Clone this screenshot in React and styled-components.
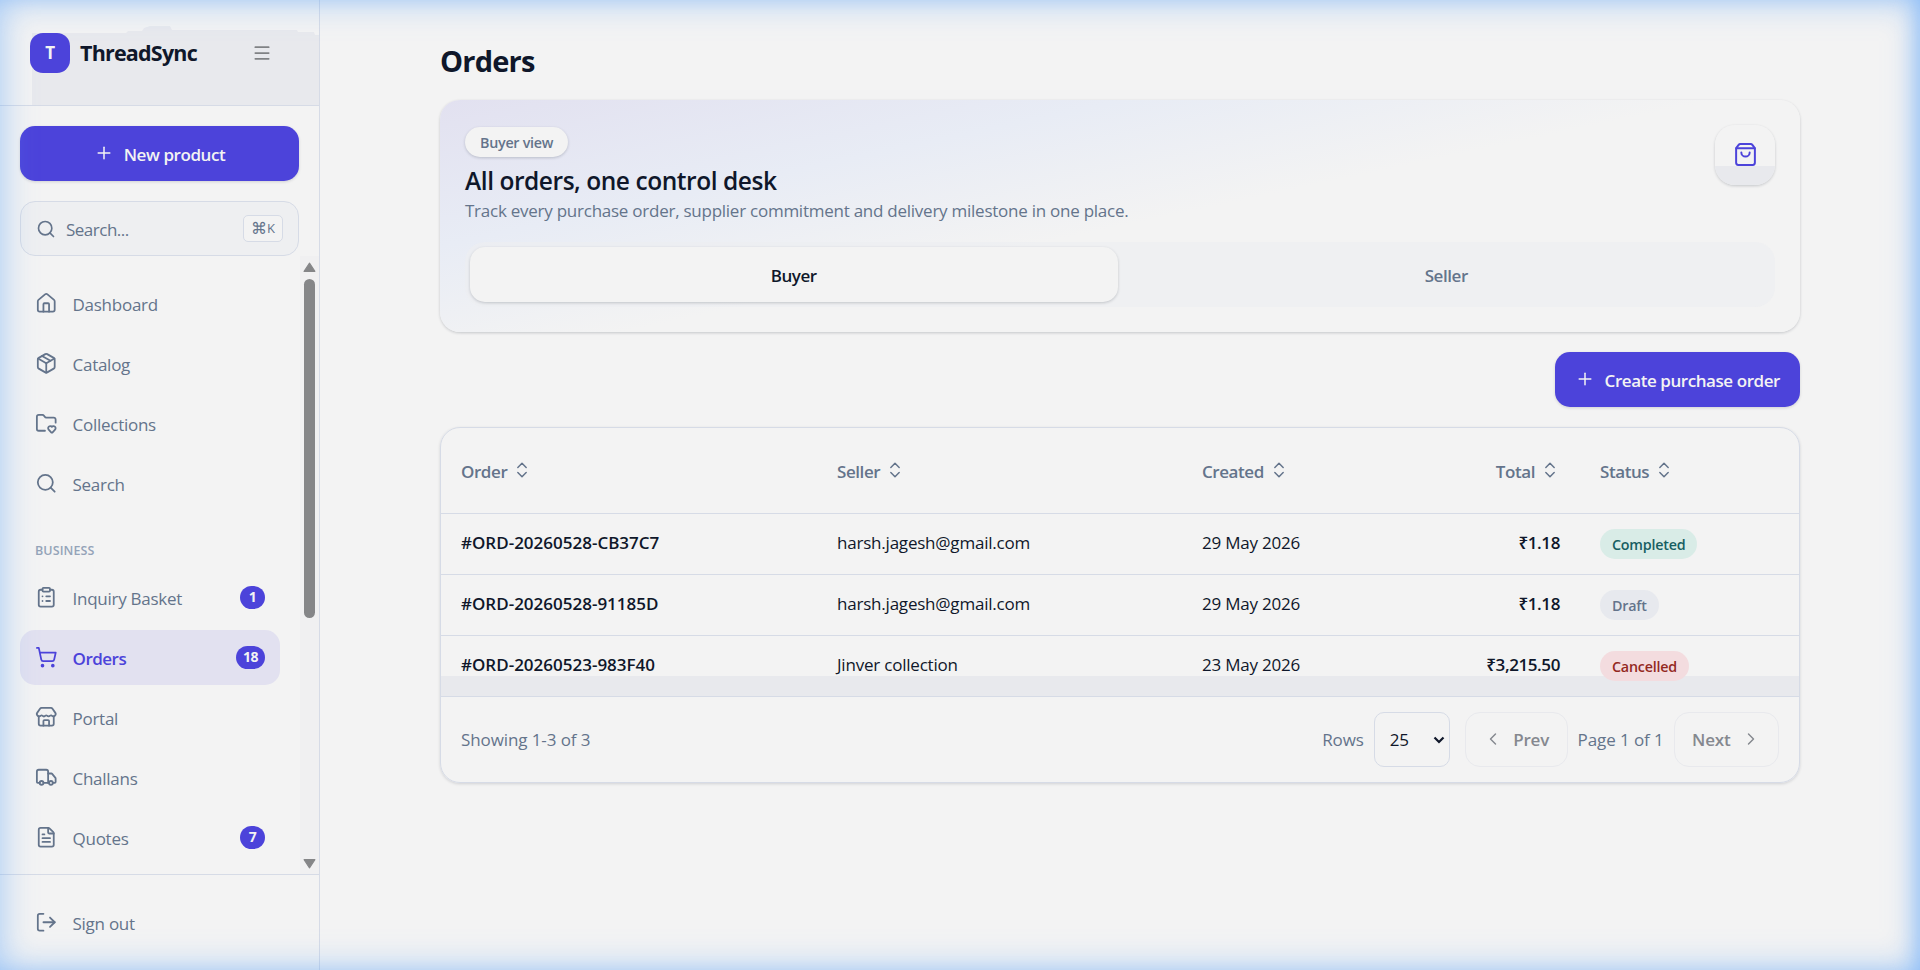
import styled, { createGlobalStyle } from "styled-components";
import {
  ChevronLeft,
  ChevronRight,
  ChevronsUpDown,
  ClipboardList,
  FileText,
  FolderHeart,
  House,
  LogOut,
  Menu,
  Package,
  Plus,
  Search,
  ShoppingBag,
  ShoppingCart,
  Store,
  Truck,
} from "lucide-react";

const mainLinks = [
  { label: "Dashboard", icon: House },
  { label: "Catalog", icon: Package },
  { label: "Collections", icon: FolderHeart },
  { label: "Search", icon: Search },
];

const businessLinks = [
  { label: "Inquiry Basket", icon: ClipboardList, count: 1 },
  { label: "Orders", icon: ShoppingCart, count: 18, active: true },
  { label: "Portal", icon: Store },
  { label: "Challans", icon: Truck },
  { label: "Quotes", icon: FileText, count: 7 },
];

const orders = [
  {
    id: "#ORD-20260528-CB37C7",
    seller: "harsh.jagesh@gmail.com",
    created: "29 May 2026",
    total: "₹1.18",
    status: "Completed",
  },
  {
    id: "#ORD-20260528-91185D",
    seller: "harsh.jagesh@gmail.com",
    created: "29 May 2026",
    total: "₹1.18",
    status: "Draft",
  },
  {
    id: "#ORD-20260523-983F40",
    seller: "Jinver collection",
    created: "23 May 2026",
    total: "₹3,215.50",
    status: "Cancelled",
  },
];

const columns = ["Order", "Seller", "Created", "Total", "Status"];

const statusColors = {
  Completed: { background: "#d9ece7", color: "#175e62" },
  Draft: { background: "#e7e9ee", color: "#64748b" },
  Cancelled: { background: "#f3dcdf", color: "#93291f" },
};

function NavLink({ label, icon: Icon, count, active }) {
  return (
    <NavItem $active={active}>
      <Icon size={22.5} strokeWidth={1.9} />
      <NavLabel>{label}</NavLabel>
      {count && <Count>{count}</Count>}
    </NavItem>
  );
}

function Sidebar() {
  return (
    <Aside>
      <Brand>
        <Logo>T</Logo>
        <BrandName>ThreadSync</BrandName>
        <MenuButton>
          <Menu size={20} strokeWidth={2.1} />
        </MenuButton>
      </Brand>
      <Actions>
        <PrimaryButton>
          <Plus size={20} strokeWidth={1.8} />
          New product
        </PrimaryButton>
        <SearchBox>
          <Search size={20} strokeWidth={2} />
          <span>Search...</span>
          <Kbd>
            <b>⌘</b>K
          </Kbd>
        </SearchBox>
      </Actions>
      <NavArea>
        <Nav>
          {mainLinks.map((link) => (
            <NavLink key={link.label} {...link} />
          ))}
          <NavTitle>BUSINESS</NavTitle>
          {businessLinks.map((link) => (
            <NavLink key={link.label} {...link} />
          ))}
        </Nav>
        <Scrollbar>
          <ScrollArrow viewBox="0 0 12 10">
            <path d="M6 1 L11 8.6 H1 Z" />
          </ScrollArrow>
          <ScrollThumb />
          <ScrollArrow viewBox="0 0 12 10">
            <path d="M6 9 L11 1.4 H1 Z" />
          </ScrollArrow>
        </Scrollbar>
      </NavArea>
      <AsideFooter>
        <NavLink label="Sign out" icon={LogOut} />
      </AsideFooter>
    </Aside>
  );
}

function Hero() {
  return (
    <HeroCard>
      <HeroTop>
        <div>
          <ViewBadge>Buyer view</ViewBadge>
          <HeroTitle>All orders, one control desk</HeroTitle>
          <HeroText>
            Track every purchase order, supplier commitment and delivery
            milestone in one place.
          </HeroText>
        </div>
        <HeroIcon>
          <ShoppingBag size={25} strokeWidth={1.9} />
        </HeroIcon>
      </HeroTop>
      <Tabs>
        <Tab $active>Buyer</Tab>
        <Tab>Seller</Tab>
      </Tabs>
    </HeroCard>
  );
}

function OrdersTable() {
  return (
    <TableCard>
      <Table>
        <colgroup>
          <col width="376" />
          <col width="365" />
          <col width="200" />
          <col width="198" />
          <col />
        </colgroup>
        <thead>
          <tr>
            {columns.map((name) => (
              <HeadCell key={name} $right={name === "Total"}>
                <SortLabel>
                  {name}
                  <ChevronsUpDown size={20} strokeWidth={1.8} />
                </SortLabel>
              </HeadCell>
            ))}
          </tr>
        </thead>
        <tbody>
          {orders.map((order) => (
            <Row key={order.id}>
              <Cell $strong>{order.id}</Cell>
              <Cell>{order.seller}</Cell>
              <Cell>{order.created}</Cell>
              <Cell $amount>{order.total}</Cell>
              <StatusCell>
                <Status $status={order.status}>{order.status}</Status>
              </StatusCell>
            </Row>
          ))}
        </tbody>
      </Table>
      <TableFooter>
        <Summary>Showing 1-3 of 3</Summary>
        <span>Rows</span>
        <RowsSelect>
          25
          <svg width="12" height="8" viewBox="0 0 12 8">
            <path d="M1.5 1.5 L6 6 L10.5 1.5" />
          </svg>
        </RowsSelect>
        <PageButton>
          <ChevronLeft size={20} strokeWidth={1.7} />
          Prev
        </PageButton>
        <span>Page 1 of 1</span>
        <PageButton>
          Next
          <ChevronRight size={20} strokeWidth={1.7} />
        </PageButton>
      </TableFooter>
    </TableCard>
  );
}

export default function App() {
  return (
    <>
      <GlobalStyle />
      <Page>
        <Sidebar />
        <Main>
          <PageTitle>Orders</PageTitle>
          <Hero />
          <PrimaryButton $compact>
            <Plus size={20} strokeWidth={1.8} />
            Create purchase order
          </PrimaryButton>
          <OrdersTable />
        </Main>
        <EdgeGlow />
      </Page>
    </>
  );
}

const GlobalStyle = createGlobalStyle`
  * {
    box-sizing: border-box;
  }

  body {
    margin: 0;
    background-color: #f3f3f3;
    color: #0f172a;
    font-family: "Open Sans", "Noto Sans", sans-serif;
    font-size: 17px;
    line-height: 25px;
    letter-spacing: -0.26px;
  }

  svg {
    flex-shrink: 0;
  }
`;

const Page = styled.div`
  position: relative;
  display: flex;
  height: 970px;
  overflow: hidden;
`;

/* soft blue glow round the window, heavier on the right */
const EdgeGlow = styled.div`
  position: absolute;
  inset: 0;
  pointer-events: none;
  box-shadow: inset 0 0 34px rgba(96, 165, 250, 0.56),
    inset -12px 0 20px -8px rgba(96, 165, 250, 0.4);
`;

const Aside = styled.aside`
  display: flex;
  flex-direction: column;
  width: 320px;
  flex-shrink: 0;
  border-right: 1px solid #d6dbe6;
`;

const Brand = styled.div`
  position: relative;
  display: flex;
  align-items: center;
  height: 106px;
  padding: 0 47px 0 30px;
  border-bottom: 1px solid #d6dbe6;

  &::before {
    content: "";
    position: absolute;
    inset: 26px 0 0 32px;
    background-color: #e8e9ed;
    clip-path: polygon(
      0 7px,
      94px 7px,
      96px 5px,
      110px 5px,
      112px 2px,
      118px 0,
      138px 0,
      140px 4px,
      265px 4px,
      266px 6px,
      282px 6px,
      283px 9px,
      100% 9px,
      100% 100%,
      0 100%
    );
  }

  & > * {
    z-index: 1;
  }
`;

const Logo = styled.div`
  display: grid;
  place-items: center;
  width: 40px;
  height: 40px;
  border-radius: 13px;
  background-color: #4c43da;
  color: #f3f3f3;
  font-size: 17px;
  font-weight: 700;
`;

const BrandName = styled.strong`
  flex: 1;
  margin-left: 10px;
  font-size: 21.5px;
  font-weight: 700;
  letter-spacing: -0.8px;
`;

const MenuButton = styled.div`
  display: grid;
  place-items: center;
  width: 20px;
  color: #808285;
`;

const Actions = styled.div`
  display: flex;
  flex-direction: column;
  gap: 20px;
  padding: 20px 20px 0;
`;

const PrimaryButton = styled.div`
  display: flex;
  align-items: center;
  justify-content: center;
  align-self: ${(props) => (props.$compact ? "flex-end" : "stretch")};
  gap: 10px;
  height: 55px;
  padding: 1px 20px 0;
  border-radius: 15px;
  background-color: #4c43da;
  box-shadow: 0 1px 3px rgba(15, 23, 42, 0.15);
  color: #f3f3f3;
  font-weight: 600;
  letter-spacing: -0.43px;
  white-space: nowrap;

  & svg {
    margin-top: -2px;
  }
`;

const SearchBox = styled.div`
  display: flex;
  align-items: center;
  gap: 10px;
  height: 55px;
  padding: 0 15px;
  border: 1px solid #d6dbe6;
  border-radius: 15px;
  background-color: #eeeff1;
  color: #64748b;

  & > span {
    flex: 1;
    padding-top: 1px;
    letter-spacing: -0.5px;
  }
`;

const Kbd = styled.div`
  display: flex;
  align-items: center;
  justify-content: center;
  width: 40px;
  height: 27px;
  border: 1px solid #d6dbe6;
  border-radius: 5px;
  background-color: #f3f3f3;
  font-size: 13px;

  & b {
    font-size: 16px;
    font-weight: 400;
  }
`;

const NavArea = styled.div`
  display: flex;
  flex: 1;
  min-height: 0;
`;

const Nav = styled.nav`
  display: flex;
  flex-direction: column;
  flex: 1;
  gap: 5px;
  padding: 20px 20px 0;
`;

const NavItem = styled.div`
  display: flex;
  align-items: center;
  gap: 15px;
  height: 55px;
  padding: 0 15px;
  border-radius: 15px;
  background-color: ${(props) => (props.$active ? "#e2e1f0" : "transparent")};
  color: ${(props) => (props.$active ? "#4c43da" : "#64748b")};
  font-weight: ${(props) => (props.$active ? 600 : 400)};
  letter-spacing: ${(props) => (props.$active ? "-0.5px" : "-0.26px")};
`;

const NavLabel = styled.span`
  flex: 1;
  padding-top: 2px;
`;

const Count = styled.span`
  height: 23px;
  min-width: 25px;
  padding: 0 7px;
  border-radius: 12px;
  background-color: #4c43da;
  color: #f3f3f3;
  font-size: 14px;
  font-weight: 700;
  line-height: 21px;
  text-align: center;
`;

const NavTitle = styled.div`
  height: 49px;
  padding: 22px 15px 0;
  color: #94a3b8;
  font-size: 12.5px;
  font-weight: 600;
  letter-spacing: 0.1px;
`;

const Scrollbar = styled.div`
  display: flex;
  flex-direction: column;
  align-items: center;
  width: 19px;
  padding: 6px 0 5px;
  background-color: #f0f0f1;
`;

const ScrollArrow = styled.svg`
  width: 13px;
  height: 11px;
  fill: #858688;
  stroke: #858688;
  stroke-linejoin: round;
`;

const ScrollThumb = styled.div`
  width: 11px;
  height: 339px;
  margin: 6px 0 auto;
  border-radius: 6px;
  background-color: #858688;
`;

const AsideFooter = styled.div`
  height: 96px;
  padding: 20px;
  border-top: 1px solid #d6dbe6;
`;

const Main = styled.main`
  display: flex;
  flex-direction: column;
  flex: 1;
  padding: 40px 120px 0;
`;

const PageTitle = styled.h1`
  margin: 0;
  height: 60px;
  font-size: 29px;
  font-weight: 700;
  line-height: 42px;
  letter-spacing: -0.8px;
`;

const HeroCard = styled.section`
  height: 232px;
  margin-bottom: 20px;
  padding: 25px 25px 0;
  border-radius: 20px;
  background: linear-gradient(168deg, #e2e1f0 0%, #e8ecf5 28%, #f3f3f3 52%);
  box-shadow: 0 1px 3px rgba(15, 23, 42, 0.2);
`;

const HeroTop = styled.div`
  display: flex;
  justify-content: space-between;
  height: 117px;
`;

const ViewBadge = styled.span`
  display: inline-block;
  height: 30px;
  margin-top: 2px;
  padding: 0 15px;
  border-radius: 15px;
  background-color: #f3f3f3;
  box-shadow: 0 1px 3px rgba(15, 23, 42, 0.2);
  color: #64748b;
  font-size: 14.3px;
  font-weight: 600;
  line-height: 31px;
`;

const HeroTitle = styled.h2`
  margin: 7px 0 0;
  font-size: 24.5px;
  font-weight: 600;
  line-height: 34px;
  letter-spacing: -0.45px;
`;

const HeroText = styled.p`
  margin: 0;
  color: #64748b;
  letter-spacing: -0.25px;
`;

const HeroIcon = styled.div`
  display: grid;
  place-items: center;
  width: 60px;
  height: 60px;
  border-radius: 20px;
  background: linear-gradient(#f3f3f3 41px, #e8e9ed 41px);
  box-shadow: 0 1px 3px rgba(15, 23, 42, 0.2);
  color: #4c43da;

  & svg {
    margin-top: -2px;
  }
`;

const Tabs = styled.div`
  display: grid;
  grid-template-columns: 1fr 1fr;
  gap: 5px;
  height: 65px;
  padding: 5px;
  border-radius: 20px;
  background-color: rgba(236, 238, 241, 0.7);
`;

const Tab = styled.div`
  display: grid;
  place-items: center;
  padding-top: 2px;
  border-radius: 15px;
  background-color: ${(props) => (props.$active ? "#f3f3f3" : "transparent")};
  box-shadow: ${(props) =>
    props.$active ? "0 1px 3px rgba(15, 23, 42, 0.2)" : "none"};
  color: ${(props) => (props.$active ? "#0f172a" : "#64748b")};
  font-weight: 600;
  letter-spacing: -0.45px;
`;

const TableCard = styled.section`
  height: 356px;
  margin-top: 20px;
  border: 1px solid #d6dbe6;
  border-radius: 20px;
  box-shadow: 0 1px 3px rgba(15, 23, 42, 0.15);
  overflow: hidden;
`;

const Table = styled.table`
  width: 100%;
  table-layout: fixed;
  border-collapse: separate;
  border-spacing: 0;
`;

const HeadCell = styled.th`
  height: 86px;
  padding: 0 20px;
  border-bottom: 1px solid #d6dbe6;
  color: #64748b;
  font-weight: 600;
  letter-spacing: -0.43px;
  text-align: ${(props) => (props.$right ? "right" : "left")};
`;

const SortLabel = styled.span`
  display: inline-flex;
  align-items: center;
  gap: 5px;
  vertical-align: middle;

  & svg {
    margin-top: -3px;
  }
`;

const Row = styled.tr`
  &:last-child {
    background: linear-gradient(transparent 40px, #e8e9ed 40px);
  }
`;

const Cell = styled.td`
  height: 61px;
  padding: 0 20px 4px;
  border-bottom: 1px solid #d6dbe6;
  font-weight: ${(props) => (props.$strong || props.$amount ? 600 : 400)};
  letter-spacing: ${(props) =>
    props.$amount ? "-0.4px" : props.$strong ? "0" : "-0.21px"};
  text-align: ${(props) => (props.$amount ? "right" : "left")};
`;

const StatusCell = styled(Cell)`
  padding-bottom: 0;
`;

const Status = styled.span`
  display: inline-block;
  height: 30px;
  padding: 0 12px;
  border-radius: 15px;
  background-color: ${(props) => statusColors[props.$status].background};
  color: ${(props) => statusColors[props.$status].color};
  font-size: 14.3px;
  font-weight: 600;
  line-height: 31px;
  vertical-align: middle;
`;

const TableFooter = styled.div`
  display: flex;
  align-items: center;
  gap: 10px;
  height: 85px;
  padding: 0 20px;
  color: #64748b;
  letter-spacing: -0.1px;
`;

const Summary = styled.span`
  flex: 1;
`;

const RowsSelect = styled.div`
  display: flex;
  align-items: center;
  justify-content: space-between;
  width: 76px;
  height: 55px;
  margin-right: 5px;
  padding: 0 4px 0 15px;
  border: 1px solid #d6dbe6;
  border-radius: 10px;
  color: #0f172a;

  & path {
    fill: none;
    stroke: #0f172a;
    stroke-width: 2.2;
  }
`;

const PageButton = styled.div`
  display: flex;
  align-items: center;
  gap: 10px;
  height: 55px;
  padding: 0 17.5px;
  border: 1px solid #e8e9ed;
  border-radius: 15px;
  color: #85888f;
  font-weight: 600;
  letter-spacing: -0.2px;

  & svg {
    margin-top: -2px;
  }
`;
